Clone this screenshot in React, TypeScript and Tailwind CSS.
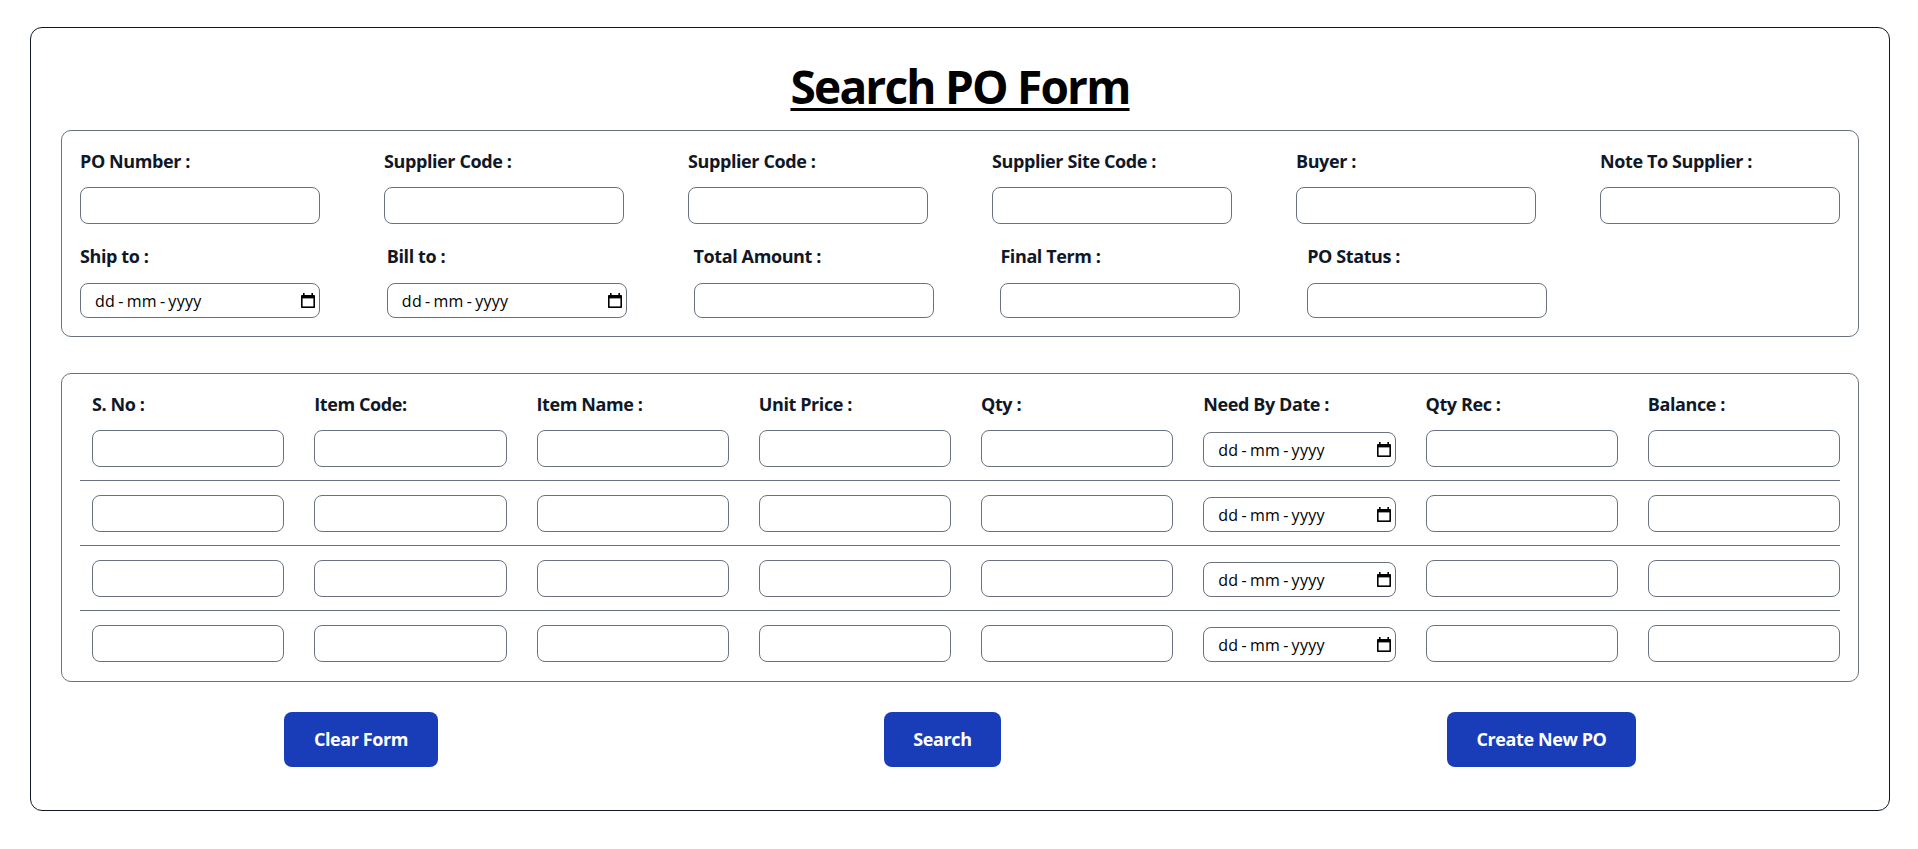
import React from "react";

function CalendarIcon() {
  return (
    <svg width="14" height="15" viewBox="0 0 14 15" aria-hidden="true">
      <rect x="2" y="0" width="1.6" height="3" fill="#000" />
      <rect x="10.4" y="0" width="1.6" height="3" fill="#000" />
      <rect x="0" y="2" width="14" height="13" rx="0.8" fill="#000" />
      <rect x="1.6" y="5.4" width="10.8" height="8" fill="#fff" />
    </svg>
  );
}

function DateField({ w, h }: { w: string; h: string }) {
  return (
    <div
      className={`${w} ${h} flex items-center justify-between border border-gray-500 rounded-lg bg-white pl-[14px] pr-[4px] text-[16px] text-black font-['Open_Sans',sans-serif]`}
    >
      <span className="flex items-center tracking-[0.3px]">
        <span>dd</span>
        <span className="mx-[3px]">-</span>
        <span>mm</span>
        <span className="mx-[3px]">-</span>
        <span>yyyy</span>
      </span>
      <CalendarIcon />
    </div>
  );
}

const label =
  "block text-[18px] font-bold leading-[28px] tracking-[-0.4px] text-gray-900 whitespace-nowrap";

function TopField({ name }: { name: string }) {
  return (
    <div className="w-[240px]">
      <span className={label}>{name}</span>
      <input className="block mt-[12px] w-[240px] h-[37px] border border-gray-500 rounded-lg bg-white" />
    </div>
  );
}

function SecondField({ name, date }: { name: string; date?: boolean }) {
  return (
    <div className="w-[240px]">
      <span className={label}>{name}</span>
      <div className="mt-[13px]">
        {date ? (
          <DateField w="w-[240px]" h="h-[35px]" />
        ) : (
          <input className="block w-[240px] h-[35px] border border-gray-500 rounded-lg bg-white" />
        )}
      </div>
    </div>
  );
}

const itemCols = [
  "S. No :",
  "Item Code:",
  "Item Name :",
  "Unit Price :",
  "Qty :",
  "Need By Date :",
  "Qty Rec :",
  "Balance :",
];

function ItemRow({ first, last }: { first?: boolean; last?: boolean }) {
  return (
    <div
      className={`pl-[12px] pb-[13px] ${first ? "" : "pt-[14px]"} ${last ? "" : "border-b border-gray-500"}`}
    >
      {first && (
        <div className="grid grid-cols-8 gap-x-[30px] mb-[12px]">
          {itemCols.map((c) => (
            <span key={c} className={label}>
              {c}
            </span>
          ))}
        </div>
      )}
      <div className="grid grid-cols-8 gap-x-[30px] items-end">
        {itemCols.map((c, i) =>
          i === 5 ? (
            <DateField key={c} w="w-full" h="h-[35px]" />
          ) : (
            <input
              key={c}
              className="block w-full h-[37px] border border-gray-500 rounded-lg bg-white"
            />
          )
        )}
      </div>
    </div>
  );
}

const btn =
  "h-[55px] rounded-lg bg-blue-800 text-white text-[18px] font-bold tracking-[-0.4px]";

export default function App() {
  return (
    <div className="min-h-screen bg-white font-['Open_Sans',sans-serif] pt-[27px]">
      <div className="ml-[30px] w-[1860px] border border-gray-900 rounded-xl px-[30px] pt-[35px] pb-[43px]">
        <h1 className="text-center text-[46px] leading-[46px] font-bold tracking-[-1.8px] text-black underline decoration-[3px] underline-offset-[4px]">
          Search PO Form
        </h1>

        <div className="mt-[21px] border border-gray-500 rounded-[10px] px-[18px] pt-[16px] pb-[18px]">
          <div className="flex justify-between">
            <TopField name="PO Number :" />
            <TopField name="Supplier Code :" />
            <TopField name="Supplier Code :" />
            <TopField name="Supplier Site Code :" />
            <TopField name="Buyer :" />
            <TopField name="Note To Supplier :" />
          </div>
          <div className="mt-[18px] flex gap-x-[66.8px]">
            <SecondField name="Ship to :" date />
            <SecondField name="Bill to :" date />
            <SecondField name="Total Amount :" />
            <SecondField name="Final Term :" />
            <SecondField name="PO Status :" />
          </div>
        </div>

        <div className="mt-[36px] border border-gray-500 rounded-[10px] px-[18px] pt-[16px] pb-[6px]">
          <ItemRow first />
          <ItemRow />
          <ItemRow />
          <ItemRow last />
        </div>

        <div className="mt-[30px] flex justify-around">
          <button className={`${btn} w-[154px]`}>Clear Form</button>
          <button className={`${btn} w-[117px]`}>Search</button>
          <button className={`${btn} w-[189px]`}>Create New PO</button>
        </div>
      </div>
    </div>
  );
}
